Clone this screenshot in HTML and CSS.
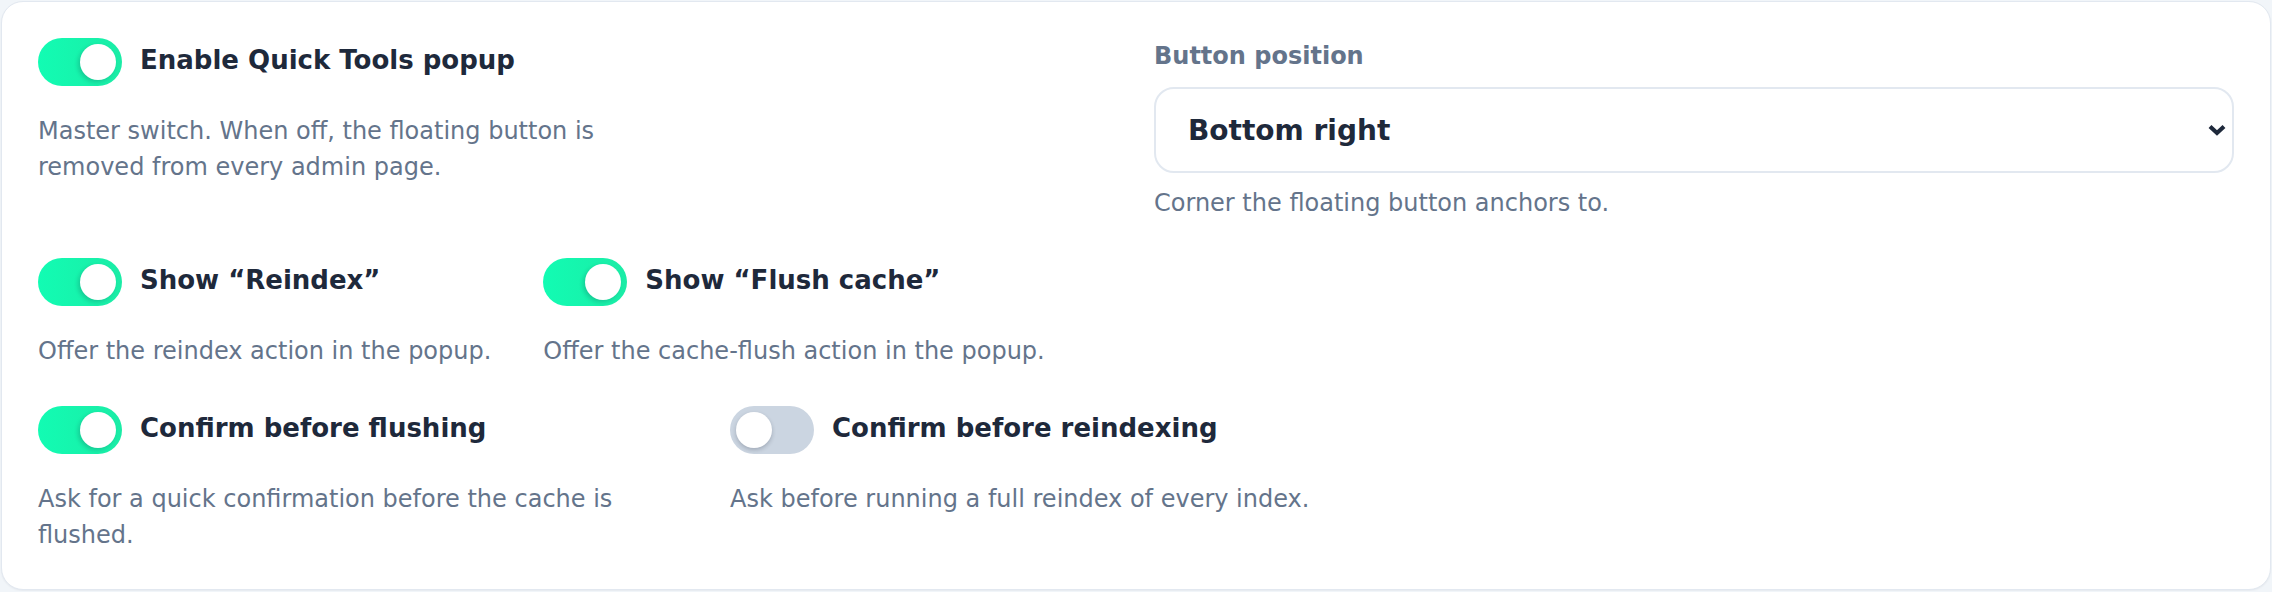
FILE: index.html
```html
<!DOCTYPE html>
<html lang="en">
<head>
  <meta charset="UTF-8" />
  <meta name="viewport" content="width=device-width, initial-scale=1.0"/>
  <title>Quick Tools settings</title>
  <link rel="stylesheet" href="styles.css">
</head>
<body>

  <div class="card">

    <div class="settings-top">
      <div class="setting">
        <div class="setting-head">
          <span class="toggle on"><span class="knob"></span></span>
          <span class="setting-title">Enable Quick Tools popup</span>
        </div>
        <p class="setting-desc">Master switch. When off, the floating button is removed from every admin page.</p>
      </div>

      <div class="field">
        <label class="field-label" for="position">Button position</label>
        <div class="select-wrap">
          <select id="position">
            <option>Bottom right</option>
            <option>Bottom left</option>
            <option>Top right</option>
            <option>Top left</option>
          </select>
          <svg class="chevron" viewBox="0 0 18 12" width="18" height="12">
            <path d="M2 2.5 L9 9 L16 2.5" fill="none" stroke="currentColor" stroke-width="4.2"/>
          </svg>
        </div>
        <p class="setting-desc">Corner the floating button anchors to.</p>
      </div>
    </div>

    <div class="settings-row">
      <div class="setting">
        <div class="setting-head">
          <span class="toggle on"><span class="knob"></span></span>
          <span class="setting-title">Show “Reindex”</span>
        </div>
        <p class="setting-desc">Offer the reindex action in the popup.</p>
      </div>
      <div class="setting">
        <div class="setting-head">
          <span class="toggle on"><span class="knob"></span></span>
          <span class="setting-title">Show “Flush cache”</span>
        </div>
        <p class="setting-desc">Offer the cache-flush action in the popup.</p>
      </div>
    </div>

    <div class="settings-row">
      <div class="setting">
        <div class="setting-head">
          <span class="toggle on"><span class="knob"></span></span>
          <span class="setting-title">Confirm before flushing</span>
        </div>
        <p class="setting-desc">Ask for a quick confirmation before the cache is flushed.</p>
      </div>
      <div class="setting">
        <div class="setting-head">
          <span class="toggle"><span class="knob"></span></span>
          <span class="setting-title">Confirm before reindexing</span>
        </div>
        <p class="setting-desc">Ask before running a full reindex of every index.</p>
      </div>
    </div>

  </div>

</body>
</html>
```

FILE: styles.css
```css
:root {
  --ink: #1e293b;
  --muted: #64748b;
  --line: #e2e8f0;
  --green1: #12fcb3;
  --green2: #1beca6;
  --off: #cbd5e1;
}

* {
  box-sizing: border-box;
}

body {
  margin: 0;
  padding: 1px;
  background: #f1f5f9;
  font-family: 'DejaVu Sans', 'Liberation Sans', sans-serif;
  color: var(--ink);
}

.card {
  background: #fff;
  border: 1px solid var(--line);
  border-radius: 22px;
  padding: 36px;
  display: flex;
  flex-direction: column;
  gap: 37px;
  box-shadow: 0 1px 2px rgba(15, 23, 42, 0.05);
}

.settings-top {
  display: grid;
  grid-template-columns: 1fr 1fr;
  column-gap: 36px;
}

.settings-row {
  display: flex;
  flex-wrap: wrap;
  gap: 52px;
}

.setting {
  max-width: 640px;
}

.setting-head {
  display: flex;
  align-items: center;
  gap: 18px;
}

.setting-title {
  font-size: 26px;
  font-weight: bold;
  color: var(--ink);
  padding-bottom: 5px;
}

.setting-desc {
  margin: 27px 0 0;
  font-size: 24px;
  line-height: 36px;
  color: var(--muted);
}

.toggle {
  flex: none;
  width: 84px;
  height: 48px;
  padding: 6px;
  border-radius: 24px;
  background: var(--off);
  display: flex;
  justify-content: flex-start;
}

.toggle.on {
  background: linear-gradient(90deg, var(--green1), var(--green2));
  justify-content: flex-end;
}

.knob {
  width: 36px;
  height: 36px;
  border-radius: 50%;
  background: #fff;
  box-shadow: 0 2px 4px rgba(15, 23, 42, 0.22);
}

.toggle.on .knob {
  box-shadow: -2px 2px 4px rgba(15, 23, 42, 0.18);
}

.field-label {
  display: block;
  font-size: 24px;
  line-height: 36px;
  font-weight: bold;
  color: var(--muted);
}

.select-wrap {
  position: relative;
  margin-top: 13px;
}

.select-wrap select {
  width: 100%;
  height: 86px;
  padding: 0 60px 0 32px;
  appearance: none;
  -webkit-appearance: none;
  background: #fff;
  border: 2px solid var(--line);
  border-radius: 20px;
  font-family: inherit;
  font-size: 28px;
  font-weight: bold;
  color: var(--ink);
}

.chevron {
  position: absolute;
  right: 8px;
  top: 37px;
  color: var(--ink);
  pointer-events: none;
}

.field .setting-desc {
  margin-top: 12px;
}
```
